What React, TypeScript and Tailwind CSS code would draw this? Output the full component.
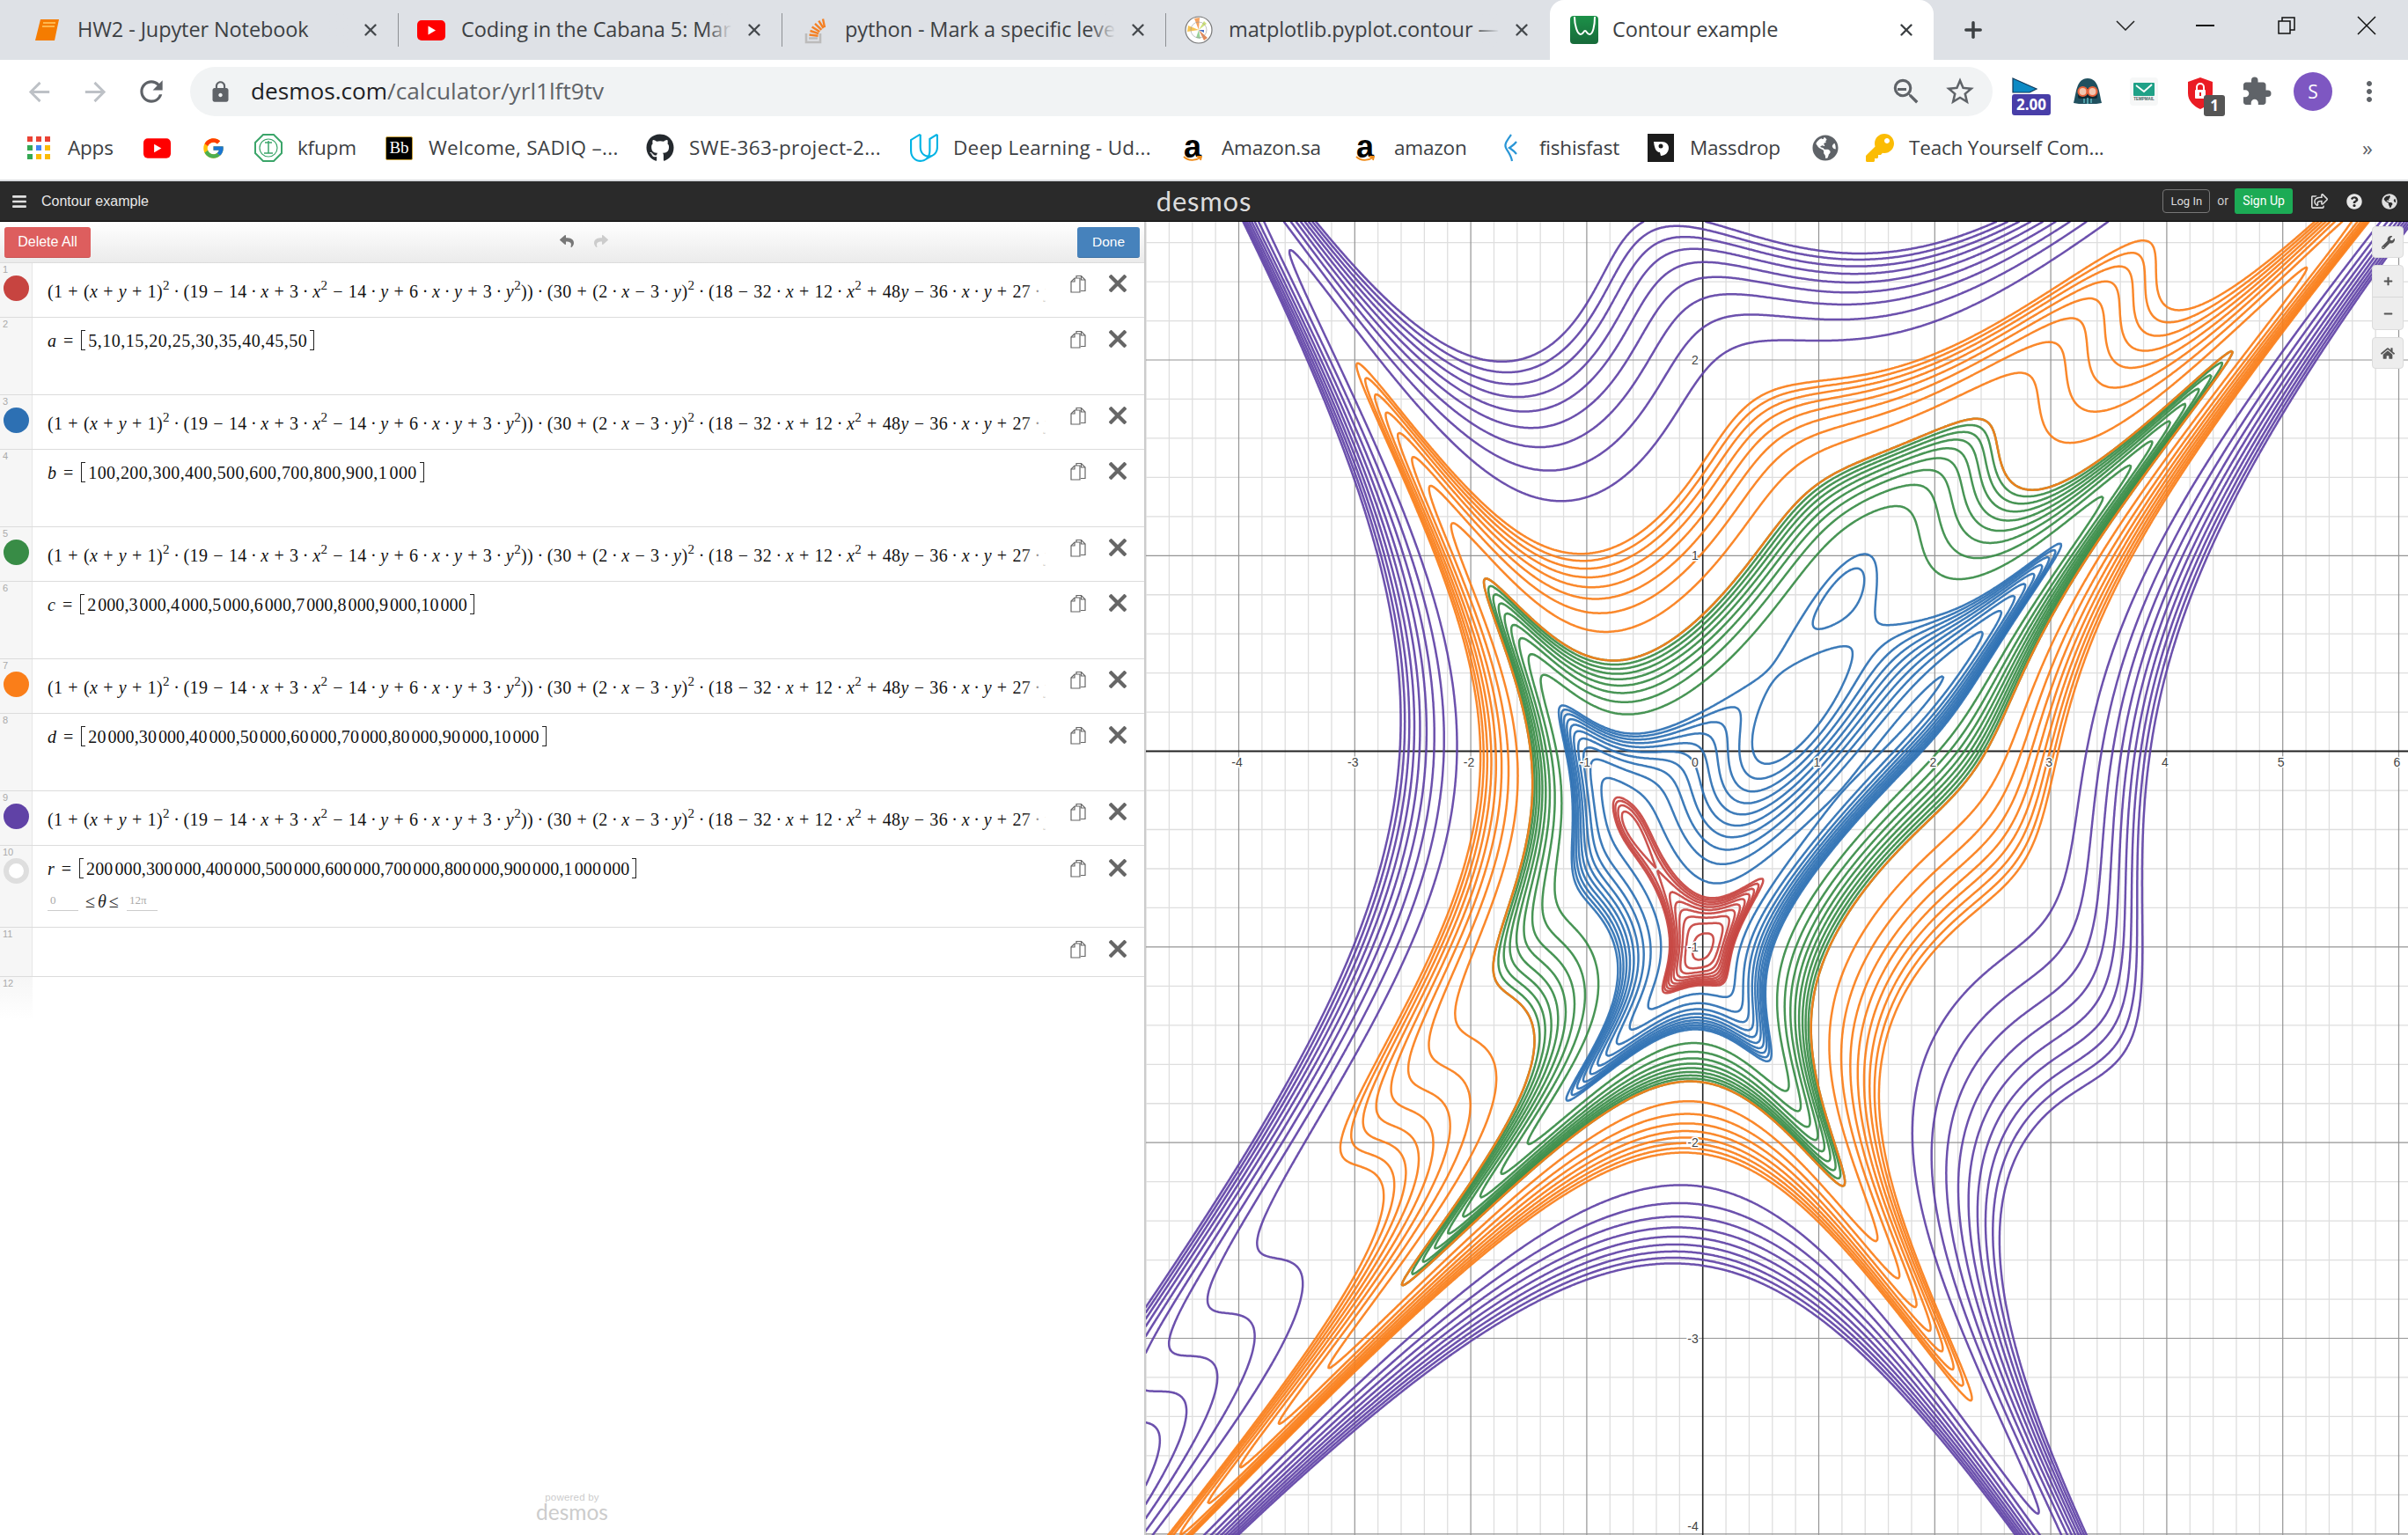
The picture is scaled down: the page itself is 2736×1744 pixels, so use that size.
import React, { useMemo } from "react";
import { MdArrowBack, MdArrowForward, MdRefresh, MdLock, MdStarBorder, MdExtension, MdMoreVert, MdSearch } from "react-icons/md";
import { FaBars, FaGithub, FaGlobeAmericas, FaKey, FaQuestionCircle, FaRegShareSquare, FaWrench, FaHome, FaPlus, FaMinus, FaReply, FaShare } from "react-icons/fa";
import { FcGoogle } from "react-icons/fc";
import { SiUdacity } from "react-icons/si";
import { X, Plus } from "lucide-react";

const W = 1434, H = 1492, X0 = 632.7, Y0 = 601.6, SX = 131.8, SY = 222.3;

function f(x: number, y: number) {
  const a = x + y + 1, b = 2 * x - 3 * y;
  return (1 + a * a * (19 - 14 * x + 3 * x * x - 14 * y + 6 * x * y + 3 * y * y)) *
    (30 + b * b * (18 - 32 * x + 12 * x * x + 48 * y - 36 * x * y + 27 * y * y));
}

const GROUPS: { color: string; levels: number[] }[] = [
  { color: "#c74440", levels: [5, 10, 15, 20, 25, 30, 35, 40, 45, 50] },
  { color: "#2d70b3", levels: [100, 200, 300, 400, 500, 600, 700, 800, 900, 1000] },
  { color: "#388c46", levels: [2000, 3000, 4000, 5000, 6000, 7000, 8000, 9000, 10000] },
  { color: "#fa7e19", levels: [20000, 30000, 40000, 50000, 60000, 70000, 80000, 90000, 10000] },
  { color: "#6042a6", levels: [200000, 300000, 400000, 500000, 600000, 700000, 800000, 900000, 1000000] },
];

function contours() {
  const step = 1.5;
  const nx = Math.ceil(W / step) + 1, ny = Math.ceil(H / step) + 1;
  const g = new Float64Array(nx * ny);
  for (let j = 0; j < ny; j++) for (let i = 0; i < nx; i++) g[j * nx + i] = f((i * step - X0) / SX, (Y0 - j * step) / SY);
  const out: { color: string; d: string }[] = [];
  for (const gr of GROUPS) {
    for (const L of gr.levels) {
      const parts: string[] = [];
      for (let j = 0; j < ny - 1; j++) {
        for (let i = 0; i < nx - 1; i++) {
          const a = g[j * nx + i], b = g[j * nx + i + 1], c = g[(j + 1) * nx + i + 1], d = g[(j + 1) * nx + i];
          const idx = (a > L ? 1 : 0) | (b > L ? 2 : 0) | (c > L ? 4 : 0) | (d > L ? 8 : 0);
          if (idx === 0 || idx === 15) continue;
          const x = i * step, y = j * step;
          const T = () => `${(x + (step * (L - a)) / (b - a)).toFixed(1)} ${y.toFixed(1)}`;
          const R = () => `${(x + step).toFixed(1)} ${(y + (step * (L - b)) / (c - b)).toFixed(1)}`;
          const Bt = () => `${(x + (step * (L - d)) / (c - d)).toFixed(1)} ${(y + step).toFixed(1)}`;
          const Lf = () => `${x.toFixed(1)} ${(y + (step * (L - a)) / (d - a)).toFixed(1)}`;
          const seg = (p: string, q: string) => parts.push(`M${p}L${q}`);
          switch (idx) {
            case 1: case 14: seg(Lf(), T()); break;
            case 2: case 13: seg(T(), R()); break;
            case 3: case 12: seg(Lf(), R()); break;
            case 4: case 11: seg(R(), Bt()); break;
            case 6: case 9: seg(T(), Bt()); break;
            case 7: case 8: seg(Lf(), Bt()); break;
            case 5: seg(Lf(), T()); seg(R(), Bt()); break;
            case 10: seg(T(), R()); seg(Lf(), Bt()); break;
          }
        }
      }
      out.push({ color: gr.color, d: parts.join("") });
    }
  }
  return out;
}

function Graph() {
  const paths = useMemo(contours, []);
  const vMinor: number[] = [], hMinor: number[] = [];
  for (let k = -30; k <= 40; k++) if (k % 5 !== 0) vMinor.push(X0 + (k * SX) / 5);
  for (let k = -20; k <= 25; k++) if (k % 5 !== 0) hMinor.push(Y0 - (k * SY) / 5);
  const vMajor = [-4, -3, -2, -1, 1, 2, 3, 4, 5, 6];
  const hMajor = [2, 1, -1, -2, -3, -4];
  return (
    <svg width={W} height={H} viewBox={`0 0 ${W} ${H}`} className="block">
      <rect width={W} height={H} fill="#ffffff" />
      {vMinor.map((x) => <line key={x} x1={x} x2={x} y1={0} y2={H} stroke="#dedede" strokeWidth={1.3} />)}
      {hMinor.map((y) => <line key={y} y1={y} y2={y} x1={0} x2={W} stroke="#dedede" strokeWidth={1.3} />)}
      {vMajor.map((k) => <line key={k} x1={X0 + k * SX} x2={X0 + k * SX} y1={0} y2={H} stroke="#949494" strokeWidth={1.2} />)}
      {hMajor.map((k) => <line key={k} y1={Y0 - k * SY} y2={Y0 - k * SY} x1={0} x2={W} stroke="#949494" strokeWidth={1.2} />)}
      <line x1={0} x2={W} y1={Y0} y2={Y0} stroke="#222222" strokeWidth={2} />
      <line x1={X0} x2={X0} y1={0} y2={H} stroke="#222222" strokeWidth={1.6} />
      {paths.map((p, i) => (
        <path key={i} d={p.d} fill="none" stroke={p.color} strokeWidth={2.5} strokeLinecap="round" strokeOpacity={0.92} />
      ))}
      <g fontFamily="'Liberation Sans', sans-serif" fontSize={14} fill="#444444" stroke="#ffffff" strokeWidth={3} paintOrder="stroke">
        {vMajor.map((k) => <text key={k} x={X0 + k * SX - 2} y={Y0 + 17} textAnchor="middle">{k}</text>)}
        <text x={X0 - 5} y={Y0 + 17} textAnchor="end">0</text>
        {hMajor.map((k) => <text key={k} x={X0 - 5} y={Math.min(Y0 - k * SY + 5, 1487)} textAnchor="end">{k}</text>)}
      </g>
    </svg>
  );
}

const I = ({ c }: { c: string }) => <span className="italic">{c}</span>;
const Op = ({ c }: { c: string }) => <span className="mx-[5.9px]">{c}</span>;
const Dt = () => <span className="mx-[4.3px]">·</span>;
const Sq = () => <span className="relative -top-[9px] text-[15px] leading-none">2</span>;

const Expr = () => (
  <div className="whitespace-nowrap text-[20px] leading-none tracking-[0.4px] text-[#111] font-['Liberation_Serif',serif]">
    (1<Op c="+" />(<I c="x" /><Op c="+" /><I c="y" /><Op c="+" />1)<Sq /><Dt />(19<Op c="−" />14<Dt /><I c="x" /><Op c="+" />3<Dt /><I c="x" /><Sq /><Op c="−" />14<Dt /><I c="y" /><Op c="+" />6<Dt /><I c="x" /><Dt /><I c="y" /><Op c="+" />3<Dt /><I c="y" /><Sq />))<Dt />(30<Op c="+" />(2<Dt /><I c="x" /><Op c="−" />3<Dt /><I c="y" />)<Sq /><Dt />(18<Op c="−" />32<Dt /><I c="x" /><Op c="+" />12<Dt /><I c="x" /><Sq /><Op c="+" />48<I c="y" /><Op c="−" />36<Dt /><I c="x" /><Dt /><I c="y" /><Op c="+" />27<Dt /><I c="y" />
  </div>
);

const ListEq = ({ v, items, tr }: { v: string; items: string; tr: string }) => (
  <div className="flex items-center whitespace-nowrap text-[20px] leading-none text-[#111] font-['Liberation_Serif',serif]">
    <span className="italic">{v}</span>
    <span className="mx-[8px]">=</span>
    <span className="ml-[1px] mr-[3px] inline-block h-[23px] w-[5px] border-y border-l border-[#222]" />
    <span className={tr}>{items}</span>
    <span className="ml-[3px] inline-block h-[23px] w-[5px] border-y border-r border-[#222]" />
  </div>
);

const CopyIcon = () => (
  <svg width="20" height="21" viewBox="0 0 20 21" fill="none" stroke="#666" strokeWidth="1.2">
    <path d="M8 5V1.500h5.500l4.500 4.500V18.500H13" fill="#fff" />
    <path d="M2 8l4-4h6v16H2z" fill="#fff" />
    <path d="M6 4v4H2M13.500 1.500V6H18" />
  </svg>
);
const XIcon = () => (
  <svg width="20" height="20" viewBox="0 0 20 20" stroke="#666" strokeWidth="4.200" strokeLinecap="square">
    <path d="M2.500 2.500l15 15M17.500 2.500l-15 15" />
  </svg>
);

function Row({ n, h, color, hollow, iconY, children, fade }: { n: number; h: string; color?: string; hollow?: boolean; iconY: string; children?: React.ReactNode; fade?: boolean }) {
  return (
    <div className={`flex ${h} border-t border-[#dcdcdc] relative`}>
      <div className="w-[37px] shrink-0 bg-[#f6f6f6] border-r border-[#e6e6e6] flex flex-col">
        <div className="pl-[3px] pt-[2px] text-[11px] leading-[11px] text-[#aaaaaa] font-['Liberation_Sans',sans-serif]">{n}</div>
        {color && <div className={`ml-[4px] mt-[1px] h-[29px] w-[29px] rounded-full ${color}`} />}
        {hollow && <div className="ml-[4px] mt-[1px] h-[29px] w-[29px] rounded-full border-[6px] border-[#dedede] bg-white" />}
      </div>
      <div className="flex-1 min-w-0 pl-[17px] overflow-hidden">{children}</div>
      <div className={`w-[112px] shrink-0 flex gap-[25px] pl-[27px] ${iconY}`}>
        <CopyIcon />
        <XIcon />
      </div>
      {fade && <div className="absolute right-[108px] top-0 bottom-0 w-[30px] bg-gradient-to-r from-transparent to-white" />}
    </div>
  );
}

function Panel() {
  return (
    <div className="w-[1302px] shrink-0 border-r-2 border-[#cccccc] bg-white flex flex-col font-['Liberation_Sans',sans-serif]">
      <div className="h-[46px] shrink-0 bg-gradient-to-b from-white to-[#ebebeb] flex items-center pl-[5px] pr-[5px]">
        <div className="w-[98px] h-[35px] rounded-[3px] bg-[#dd5e5e] border-b border-[#c95252] flex items-center justify-center text-white text-[16px]">Delete All</div>
        <div className="flex-1 flex justify-center gap-[17px] -mt-[2px]">
          <FaReply className="w-[22px] h-[16px] text-[#777]" />
          <FaShare className="w-[22px] h-[16px] text-[#ccc]" />
        </div>
        <div className="w-[71px] h-[35px] rounded-[3px] bg-[#4682bc] border-b border-[#3a6fa3] flex items-center justify-center text-white text-[15.500px]">Done</div>
      </div>
      <Row n={1} h="h-[62px]" color="bg-[#c74440]" iconY="pt-[13px]" fade><div className="pt-[22px]"><Expr /></div></Row>
      <Row n={2} h="h-[88px]" iconY="pt-[14px]"><div className="pt-[14px]"><ListEq v="a" items="5,10,15,20,25,30,35,40,45,50" tr="tracking-[0.5px]" /></div></Row>
      <Row n={3} h="h-[62px]" color="bg-[#2d70b3]" iconY="pt-[13px]" fade><div className="pt-[22px]"><Expr /></div></Row>
      <Row n={4} h="h-[88px]" iconY="pt-[14px]"><div className="pt-[14px]"><ListEq v="b" items="100,200,300,400,500,600,700,800,900,1 000" tr="tracking-[0.4px] [word-spacing:-3px]" /></div></Row>
      <Row n={5} h="h-[62px]" color="bg-[#388c46]" iconY="pt-[13px]" fade><div className="pt-[22px]"><Expr /></div></Row>
      <Row n={6} h="h-[88px]" iconY="pt-[14px]"><div className="pt-[14px]"><ListEq v="c" items="2 000,3 000,4 000,5 000,6 000,7 000,8 000,9 000,10 000" tr="tracking-[0.1px] [word-spacing:-3.2px]" /></div></Row>
      <Row n={7} h="h-[62px]" color="bg-[#fa7e19]" iconY="pt-[13px]" fade><div className="pt-[22px]"><Expr /></div></Row>
      <Row n={8} h="h-[88px]" iconY="pt-[14px]"><div className="pt-[14px]"><ListEq v="d" items="20 000,30 000,40 000,50 000,60 000,70 000,80 000,90 000,10 000" tr="tracking-[0.1px] [word-spacing:-3.2px]" /></div></Row>
      <Row n={9} h="h-[62px]" color="bg-[#6042a6]" iconY="pt-[13px]" fade><div className="pt-[22px]"><Expr /></div></Row>
      <Row n={10} h="h-[93px]" hollow iconY="pt-[15px]">
        <div className="pt-[14px]">
          <ListEq v="r" items="200 000,300 000,400 000,500 000,600 000,700 000,800 000,900 000,1 000 000" tr="tracking-[0.1px] [word-spacing:-3px]" />
          <div className="flex items-end mt-[15px] font-['Liberation_Serif',serif]">
            <div className="w-[35px] h-[22px] border-b border-[#cccccc] text-[13px] text-[#aaaaaa] pl-[3px]">0</div>
            <div className="ml-[8px] w-[42px] text-[20px] leading-[22px] text-[#222] tracking-[3px]">≤<span className="italic">θ</span>≤</div>
            <div className="ml-[5px] w-[35px] h-[22px] border-b border-[#cccccc] text-[13px] text-[#aaaaaa] pl-[3px]">12π</div>
          </div>
        </div>
      </Row>
      <Row n={11} h="h-[56px]" iconY="pt-[14px]" />
      <div className="h-[50px] shrink-0 border-t border-[#dcdcdc]">
        <div className="w-[37px] h-full bg-gradient-to-b from-[#f6f6f6] to-white pl-[3px] pt-[2px] text-[11px] leading-[11px] text-[#aaaaaa]">12</div>
      </div>
      <div className="mt-auto pb-[15px] flex flex-col items-center text-[#cccccc]">
        <div className="text-[11.500px] leading-[12px] tracking-[0.2px]">powered by</div>
        <div className="text-[24.500px] leading-[22px] font-['Lato',sans-serif]">desmos</div>
      </div>
    </div>
  );
}

const TabX = ({ dark }: { dark?: boolean }) => <X size={22} strokeWidth={2.6} className={dark ? "text-[#3c4043]" : "text-[#45494d]"} />;

const tabCls = "flex items-center h-[68px] w-[436px] shrink-0 relative";
const tabText = "ml-[14px] w-[308px] overflow-hidden whitespace-nowrap text-[23.500px] tracking-[-0.1px] text-[#3c4043]";

function TabBar() {
  const tabs: [React.ReactNode, string][] = [
    [<svg width="28" height="24" viewBox="0 0 28 24"><path d="M6 0h21l-5 24H0z" fill="#f57c00" /><path d="M9 4h14M8 8h14" stroke="#ffb74d" strokeWidth="2" /></svg>, "HW2 - Jupyter Notebook"],
    [<svg width="32" height="23" viewBox="0 0 32 23"><rect width="32" height="23" rx="5" fill="#ff0000" /><path d="M12.500 6.500l8.500 5-8.500 5z" fill="#fff" /></svg>, "Coding in the Cabana 5: Marching Squares"],
    [<svg width="24" height="32" viewBox="0 0 24 32"><path d="M2 20v10h16V20" fill="none" stroke="#bcbbbb" strokeWidth="2.600" /><path d="M5 25.500h10" stroke="#bcbbbb" strokeWidth="2.400" /><path d="M5.500 21.500l10 1.200M6.500 17l9.600 3.200M8.600 12.600l8.700 5.300M12 8.900l7.400 7M16.300 5.700l5.300 8.300M21 3.600l2 9.500" stroke="#f48024" strokeWidth="2.400" /></svg>, "python - Mark a specific level in a contour map"],
    [<svg width="32" height="32" viewBox="0 0 32 32"><circle cx="16" cy="16" r="15" fill="#fff" stroke="#777" strokeWidth="1.200" /><path d="M16 16L11 3l6-1z" fill="#f4a261" /><path d="M16 16L4 11l-1 7z" fill="#f6c453" /><path d="M16 16l10 9-4 3z" fill="#e38b5b" /><path d="M16 16l6-10 3 3z" fill="#cfe27a" /><path d="M16 16l6 0 0 3z" fill="#4a6fc1" /><path d="M16 16l-3 9 5 1z" fill="#9ad29a" /><circle cx="16" cy="16" r="9" fill="none" stroke="#999" strokeWidth=".6" /></svg>, "matplotlib.pyplot.contour — Matplotlib"],
  ];
  return (
    <div className="h-[68px] bg-[#dee1e6] flex items-center pl-[17px] shrink-0">
      {tabs.map(([ic, t], i) => (
        <div key={i} className={tabCls}>
          <div className="w-[40px] ml-[17px] flex justify-center">{ic}</div>
          <div className={tabText}>{t}</div>
          <div className="absolute left-[393px] top-[23px]"><TabX /></div>
          <div className="absolute left-[349px] top-[14px] bottom-[14px] w-[30px] bg-gradient-to-r from-transparent to-[#dee1e6]" />
          {i < 3 && <div className="absolute right-0 top-[15px] bottom-[15px] w-[1px] bg-[#8d9094]" />}
        </div>
      ))}
      <div className="flex items-center h-[68px] w-[436px] shrink-0 relative bg-white rounded-t-[16px]">
        <div className="w-[32px] ml-[23px] flex justify-center">
          <svg width="32" height="32" viewBox="0 0 32 32">
            <defs><linearGradient id="dg" x1="0" y1="0" x2="0" y2="1"><stop offset="0" stopColor="#1c9148" /><stop offset="1" stopColor="#176a3a" /></linearGradient></defs>
            <rect width="32" height="32" rx="4" fill="url(#dg)" />
            <path d="M5 1c0 9 3 20 7 20 3 0 3-4 5-4s2 4 5 4c4 0 6-10 6-20" fill="none" stroke="#fff" strokeWidth="2" />
          </svg>
        </div>
        <div className="ml-[16px] text-[23.500px] tracking-[-0.1px] text-[#3c4043] whitespace-nowrap">Contour example</div>
        <div className="absolute left-[394px] top-[23px]"><TabX dark /></div>
      </div>
      <div className="ml-[31px] w-[30px]"><Plus size={28} strokeWidth={3} className="text-[#3c4043]" /></div>
      <div className="ml-[146px] -mt-[10px] w-[22px] flex">
        <svg width="22" height="12" viewBox="0 0 22 12" fill="none" stroke="#222" strokeWidth="1.500"><path d="M1 1l10 10L21 1" /></svg>
      </div>
      <div className="ml-[69px] -mt-[10px] h-[2px] w-[21px] bg-[#111]" />
      <div className="ml-[72px] -mt-[10px] flex">
        <svg width="20" height="20" viewBox="0 0 20 20" fill="none" stroke="#111" strokeWidth="1.500"><rect x="1" y="5" width="13" height="14" /><path d="M5 5V1h14v14h-5" /></svg>
      </div>
      <div className="ml-[70px] -mt-[10px] flex">
        <svg width="22" height="22" viewBox="0 0 22 22" fill="none" stroke="#111" strokeWidth="1.500"><path d="M1 1l20 20M21 1L1 21" /></svg>
      </div>
    </div>
  );
}

function Toolbar() {
  return (
    <div className="h-[68px] bg-white flex items-center pl-[12px] pt-[4px] shrink-0">
      <div className="w-[64px] flex justify-center"><MdArrowBack size={35} color="#bdc1c6" /></div>
      <div className="w-[64px] flex justify-center"><MdArrowForward size={35} color="#bdc1c6" /></div>
      <div className="w-[64px] flex justify-center"><MdRefresh size={38} color="#5f6368" /></div>
      <div className="ml-[12px] w-[2048px] h-[56px] rounded-full bg-[#f1f3f4] flex items-center pl-[21px]">
        <MdLock size={27} color="#5f6368" />
        <div className="ml-[21px] text-[26.200px] text-[#5f6368] whitespace-nowrap"><span className="text-[#202124]">desmos.com</span>/calculator/yrl1lft9tv</div>
        <div className="flex-1" />
        <div className="relative mr-[25px] w-[36px]">
          <MdSearch size={38} color="#5f6368" />
          <div className="absolute left-[9px] top-[15px] h-[3px] w-[10px] bg-[#5f6368]" />
        </div>
        <div className="mr-[18px]"><MdStarBorder size={38} color="#5f6368" /></div>
      </div>
      <div className="ml-[12px] w-[64px] flex justify-center mt-[10px]">
        <div className="flex flex-col items-center">
          <svg width="30" height="18" viewBox="0 0 30 18" className="-ml-[14px]"><path d="M1 1l27 12-8 4H1z" fill="#0d8ac4" stroke="#10395a" strokeWidth="1.200" /></svg>
          <div className="mt-[1px] w-[44px] h-[24px] rounded-[3px] bg-[#483ea8] text-white text-[17px] font-bold leading-[24px] text-center font-['Open_Sans',sans-serif]">2.00</div>
        </div>
      </div>
      <div className="w-[64px] flex justify-center">
        <svg width="34" height="32" viewBox="0 0 34 32"><path d="M1 29C4 18 4 1 17 1s13 17 16 28l-6 1H7z" fill="#20505f" /><rect x="6" y="12" width="22" height="12" rx="2" fill="#0e2a34" /><circle cx="11.500" cy="16" r="5" fill="#f3c6b0" stroke="#e8643c" strokeWidth="2.200" /><circle cx="22.500" cy="16" r="5" fill="#f3c6b0" stroke="#e8643c" strokeWidth="2.200" /><path d="M13 24v5M17 23v7M21 24v5" stroke="#5fb6bf" strokeWidth="1.500" /></svg>
      </div>
      <div className="w-[64px] flex justify-center">
        <div className="w-[32px] h-[32px] rounded-[4px] bg-[#f6f7f7] flex flex-col items-center pt-[6px]">
          <svg width="24" height="15" viewBox="0 0 24 15"><rect width="24" height="15" rx="1" fill="#1fa187" /><path d="M3 3l9 7 9-8" fill="none" stroke="#fff" strokeWidth="1.800" /></svg>
          <div className="text-[4.500px] font-bold leading-[7px] text-[#44605c] font-['Liberation_Sans',sans-serif]">TEMPMAIL</div>
        </div>
      </div>
      <div className="w-[64px] h-[36px] mt-[4px] flex justify-center relative">
        <svg width="30" height="36" viewBox="0 0 30 36"><path d="M15 0l14 5v13c0 9-7 15-14 18C8 33 1 27 1 18V5z" fill="#ea1c24" /><rect x="9" y="14" width="12" height="10" rx="1" fill="#fff" /><path d="M11 14v-3a4 4 0 018 0v3" fill="none" stroke="#fff" strokeWidth="2" /><rect x="14" y="17" width="2" height="4" fill="#ea1c24" /></svg>
        <div className="absolute left-[36px] top-[20px] w-[24px] h-[24px] rounded-[3px] bg-[#555555] text-white text-[17px] font-bold leading-[24px] text-center font-['Open_Sans',sans-serif]">1</div>
      </div>
      <div className="w-[64px] flex justify-center"><MdExtension size={36} color="#5f6368" /></div>
      <div className="w-[64px] flex justify-center">
        <div className="w-[44px] h-[44px] rounded-full bg-[#7e57c2] text-white text-[21px] leading-[44px] text-center font-['Open_Sans',sans-serif]">S</div>
      </div>
      <div className="w-[64px] flex justify-center"><MdMoreVert size={36} color="#5f6368" /></div>
    </div>
  );
}

const Grid9 = () => {
  const cols = ["#ea4335", "#ea4335", "#ea4335", "#34a853", "#4285f4", "#fbbc04", "#34a853", "#fbbc04", "#fbbc04"];
  return (
    <div className="grid grid-cols-3 gap-[4px] w-[26px] ml-[3px]">
      {cols.map((c, i) => <svg key={i} width="6" height="6"><rect width="6" height="6" fill={c} /></svg>)}
    </div>
  );
};
const AmazonA = () => (
  <div className="relative w-[24px] h-[30px] ml-[4px]">
    <div className="text-[36px] font-bold leading-[28px] text-black font-['Liberation_Sans',sans-serif] text-center">a</div>
    <svg width="22" height="8" viewBox="0 0 22 8" className="absolute left-[1px] top-[24px]"><path d="M1 1c5 5 13 5 19 1M16 1l5 0-1 4" fill="none" stroke="#f08c1a" strokeWidth="1.800" /></svg>
  </div>
);

function Bookmarks() {
  const items: [string, React.ReactNode, string, string][] = [
    ["w-[134px]", <Grid9 />, "Apps", ""],
    ["w-[64px]", <svg width="31" height="23" viewBox="0 0 32 23" className="ml-[1px]"><rect width="32" height="23" rx="5" fill="#ff0000" /><path d="M12.500 6.500l8.500 5-8.500 5z" fill="#fff" /></svg>, "", ""],
    ["w-[63px]", <FcGoogle size={27} className="ml-[3px]" />, "", ""],
    ["w-[149px]", <svg width="32" height="32" viewBox="0 0 32 32"><path d="M10 1h12l9 9v12l-9 9H10l-9-9V10z" fill="#fff" stroke="#3ba56a" strokeWidth="2" /><circle cx="16" cy="16" r="10" fill="none" stroke="#3ba56a" strokeWidth="1.200" /><path d="M16 8v14M11 22h10M12 10h8" stroke="#3ba56a" strokeWidth="1.500" /></svg>, "kfupm", ""],
    ["w-[296px]", <div className="w-[31px] h-[27px] rounded-[2px] bg-black border border-[#c9a23a] text-white text-[19px] leading-[24px] text-center font-['Liberation_Serif',serif]">Bb</div>, "Welcome, SADIQ –...", "tracking-[0.3px]"],
    ["w-[300px]", <FaGithub size={32} color="#24292e" />, "SWE-363-project-2...", "tracking-[0.4px]"],
    ["w-[305px]", <SiUdacity size={32} color="#02b3e4" />, "Deep Learning - Ud...", "tracking-[0.25px]"],
    ["w-[196px]", <AmazonA />, "Amazon.sa", ""],
    ["w-[165px]", <AmazonA />, "amazon", ""],
    ["w-[171px]", <svg width="22" height="32" viewBox="0 0 22 32" className="ml-[5px]"><path d="M12 1C7 8 4 12 6 16s6 8 7 15M18 9c-3 4-5 5-8 7 3 2 5 3 8 7" fill="none" stroke="#2a96d6" strokeWidth="2.200" /></svg>, "fishisfast", ""],
    ["w-[187px]", <svg width="30" height="32" viewBox="0 0 30 32" className="ml-[1px]"><rect width="30" height="32" fill="#1c1c1c" /><path d="M7 9h9c5 0 8 3 8 7 0 5-4 9-9 9l-1-4c-3 0-6-2-7-12z" fill="#fff" /><circle cx="15" cy="14" r="2.500" fill="#1c1c1c" /></svg>, "Massdrop", ""],
    ["w-[62px]", <FaGlobeAmericas size={30} color="#5f6368" className="ml-[1px]" />, "", ""],
    ["w-[564px]", <FaKey size={32} color="#fbbc04" />, "Teach Yourself Com...", ""],
  ];
  return (
    <div className="h-[68px] bg-white flex items-center pl-[28px] pb-[4px] shrink-0 text-[22.500px] text-[#3c4043] tracking-[-0.2px]">
      {items.map(([w, ic, name, tr], i) => (
        <div key={i} className={`flex items-center gap-[17px] shrink-0 ${w}`}>
          <div className="w-[32px] flex items-center">{ic}</div>
          {name && <span className={`whitespace-nowrap ${tr}`}>{name}</span>}
        </div>
      ))}
      <span className="text-[24px] leading-none text-[#5f6368]">»</span>
    </div>
  );
}

function DesmosBar() {
  return (
    <div className="h-[46px] shrink-0 bg-[#2a2a2a] border-b border-black grid grid-cols-[1fr_auto_1fr] items-center font-['Liberation_Sans',sans-serif]">
      <div className="flex items-center pl-[13px]">
        <FaBars className="w-[18px] h-[18px] text-[#e0e0e0]" />
        <span className="ml-[16px] text-[16px] text-[#e8e8e8]">Contour example</span>
      </div>
      <div className="-mt-[2px] text-[31px] leading-[42px] text-[#dddddd] font-['Lato',sans-serif] tracking-[0.8px]">desmos</div>
      <div className="flex items-center justify-end pr-[12px]">
        <div className="w-[54px] h-[27px] rounded-[4px] border border-[#777] text-[13px] leading-[25px] text-center text-[#dddddd] font-['Roboto',sans-serif]">Log In</div>
        <span className="ml-[8px] text-[14px] text-[#cccccc] font-['Roboto',sans-serif]">or</span>
        <div className="ml-[7px] w-[66px] h-[29px] rounded-[3px] bg-[#1cab55] text-[14px] leading-[29px] text-center text-white font-['Roboto',sans-serif]">Sign Up</div>
        <FaRegShareSquare className="ml-[21px] w-[19px] h-[17px] text-[#dddddd]" />
        <FaQuestionCircle className="ml-[21px] w-[18px] h-[18px] text-[#e8e8e8]" />
        <FaGlobeAmericas className="ml-[22px] w-[18px] h-[18px] text-[#e0e0e0]" />
      </div>
    </div>
  );
}

const graphBtn = "w-[36px] bg-[#ededed] border border-[#dcdcdc] rounded-[4px] flex flex-col items-center justify-center text-[#555555]";

export default function App() {
  return (
    <div className="w-[2736px] h-[1744px] overflow-hidden flex flex-col bg-white font-['Open_Sans',sans-serif]">
      <TabBar />
      <Toolbar />
      <Bookmarks />
      <div className="h-[2px] shrink-0 bg-[#dadce0]" />
      <DesmosBar />
      <div className="flex-1 flex min-h-0">
        <Panel />
        <div className="flex-1 relative min-w-0 overflow-hidden">
          <Graph />
          <div className="absolute right-[5px] top-[5px] flex flex-col gap-[8px]">
            <div className={`${graphBtn} h-[36px]`}><FaWrench className="w-[15px] h-[15px]" /></div>
            <div className={`${graphBtn} h-[74px]`}>
              <div className="h-[37px] w-full flex items-center justify-center border-b border-[#d8d8d8]"><FaPlus className="w-[11px] h-[11px]" /></div>
              <div className="h-[37px] flex items-center justify-center"><FaMinus className="w-[11px] h-[11px]" /></div>
            </div>
            <div className={`${graphBtn} h-[36px]`}><FaHome className="w-[16px] h-[15px]" /></div>
          </div>
        </div>
      </div>
    </div>
  );
}
